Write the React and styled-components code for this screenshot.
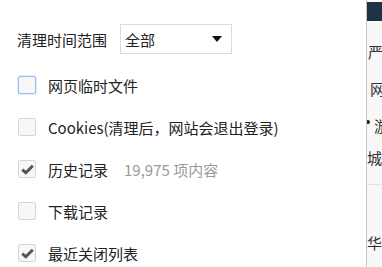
import styled, { createGlobalStyle } from 'styled-components';

const GlobalStyle = createGlobalStyle`
    html, body {
        margin: 0;
        padding: 0;
        background: #fff;
    }
    body {
        font-family: "Microsoft YaHei", "Noto Sans CJK SC", "Noto Sans", sans-serif;
        color: #222;
    }
`

const Page = styled.div`
    display: flex;
    width: 382px;
    height: 267px;
    overflow: hidden;
`

const Dialog = styled.div`
    width: 366px;
    padding: 24px 0 0 17px;
    box-sizing: border-box;
    background: #fff;
`

const RangeRow = styled.div`
    display: flex;
    align-items: center;
    height: 30px;
    margin-bottom: 10px;
    font-size: 15px;
`

const RangeLabel = styled.span`
    width: 103px;
`

const Select = styled.div`
    display: flex;
    align-items: center;
    justify-content: space-between;
    width: 112px;
    height: 30px;
    box-sizing: border-box;
    border: 1px solid #dcdcdc;
    padding: 0 9px 0 4px;
    font-size: 15px;
`

const Caret = styled.span`
    width: 0;
    height: 0;
    border-left: 5px solid transparent;
    border-right: 5px solid transparent;
    border-top: 6px solid #111;
`

const Row = styled.label`
    display: flex;
    align-items: center;
    height: 42px;
    font-size: 15px;
`

const Box = styled.span`
    display: flex;
    align-items: center;
    justify-content: center;
    width: 18px;
    height: 18px;
    box-sizing: border-box;
    margin-left: 1px;
    margin-right: 12px;
    border-radius: 2px;
    border: 1px solid ${p => (p.$focused ? '#9dbcf3' : '#d6d6d6')};
    box-shadow: ${p => (p.$focused ? '0 0 0 0.5px #c7d8f8' : 'none')};
    background: #f7f7f7;
`

const Count = styled.span`
    margin-left: 16px;
    color: #999;
`

const Side = styled.div`
    flex: 1;
    display: flex;
    flex-direction: column;
    border-left: 1px solid #c6c6c6;
    background: #f8f8f8;
    overflow: hidden;
    position: relative;
`

const SideBar = styled.div`
    margin-top: 2px;
    height: 19px;
    background: #1e3446;
`

const SideItem = styled.div`
    margin-top: ${p => p.$top}px;
    padding-left: ${p => p.$indent}px;
    font-size: 15px;
    line-height: 15px;
    color: #333;
    white-space: nowrap;
`

const SideRule = styled.div`
    margin-top: 19px;
    border-top: 1px solid #e4e4e4;
`

const Dot = styled.span`
    position: absolute;
    left: -1px;
    top: 120px;
    width: 4px;
    height: 4px;
    border-radius: 50%;
    background: #222;
`

const Check = () => (
    <svg width="13" height="11" viewBox="0 0 13 11">
        <path d="M1.3 5.6 L4.8 8.8 L11.8 1.8" fill="none" stroke="#545454" strokeWidth="3" />
    </svg>
)

const options = [
    { label: '网页临时文件', checked: false, focused: true },
    { label: 'Cookies(清理后，网站会退出登录)', checked: false },
    { label: '历史记录', checked: true, count: '19,975 项内容' },
    { label: '下载记录', checked: false },
    { label: '最近关闭列表', checked: true },
]

const App = () => {
    return (
        <Page>
            <GlobalStyle />
            <Dialog>
                <RangeRow>
                    <RangeLabel>清理时间范围</RangeLabel>
                    <Select>
                        全部
                        <Caret />
                    </Select>
                </RangeRow>
                {options.map(o => (
                    <Row key={o.label}>
                        <Box $focused={o.focused}>{o.checked && <Check />}</Box>
                        {o.label}
                        {o.count && <Count>{o.count}</Count>}
                    </Row>
                ))}
            </Dialog>
            <Side>
                <SideBar />
                <SideItem $top={23} $indent={1}>严</SideItem>
                <SideItem $top={22} $indent={3}>网</SideItem>
                <SideItem $top={22} $indent={7}>游</SideItem>
                <SideItem $top={17} $indent={0}>城</SideItem>
                <SideRule />
                <SideItem $top={50} $indent={0}>华</SideItem>
                <Dot />
            </Side>
        </Page>
    )
}

export default App
